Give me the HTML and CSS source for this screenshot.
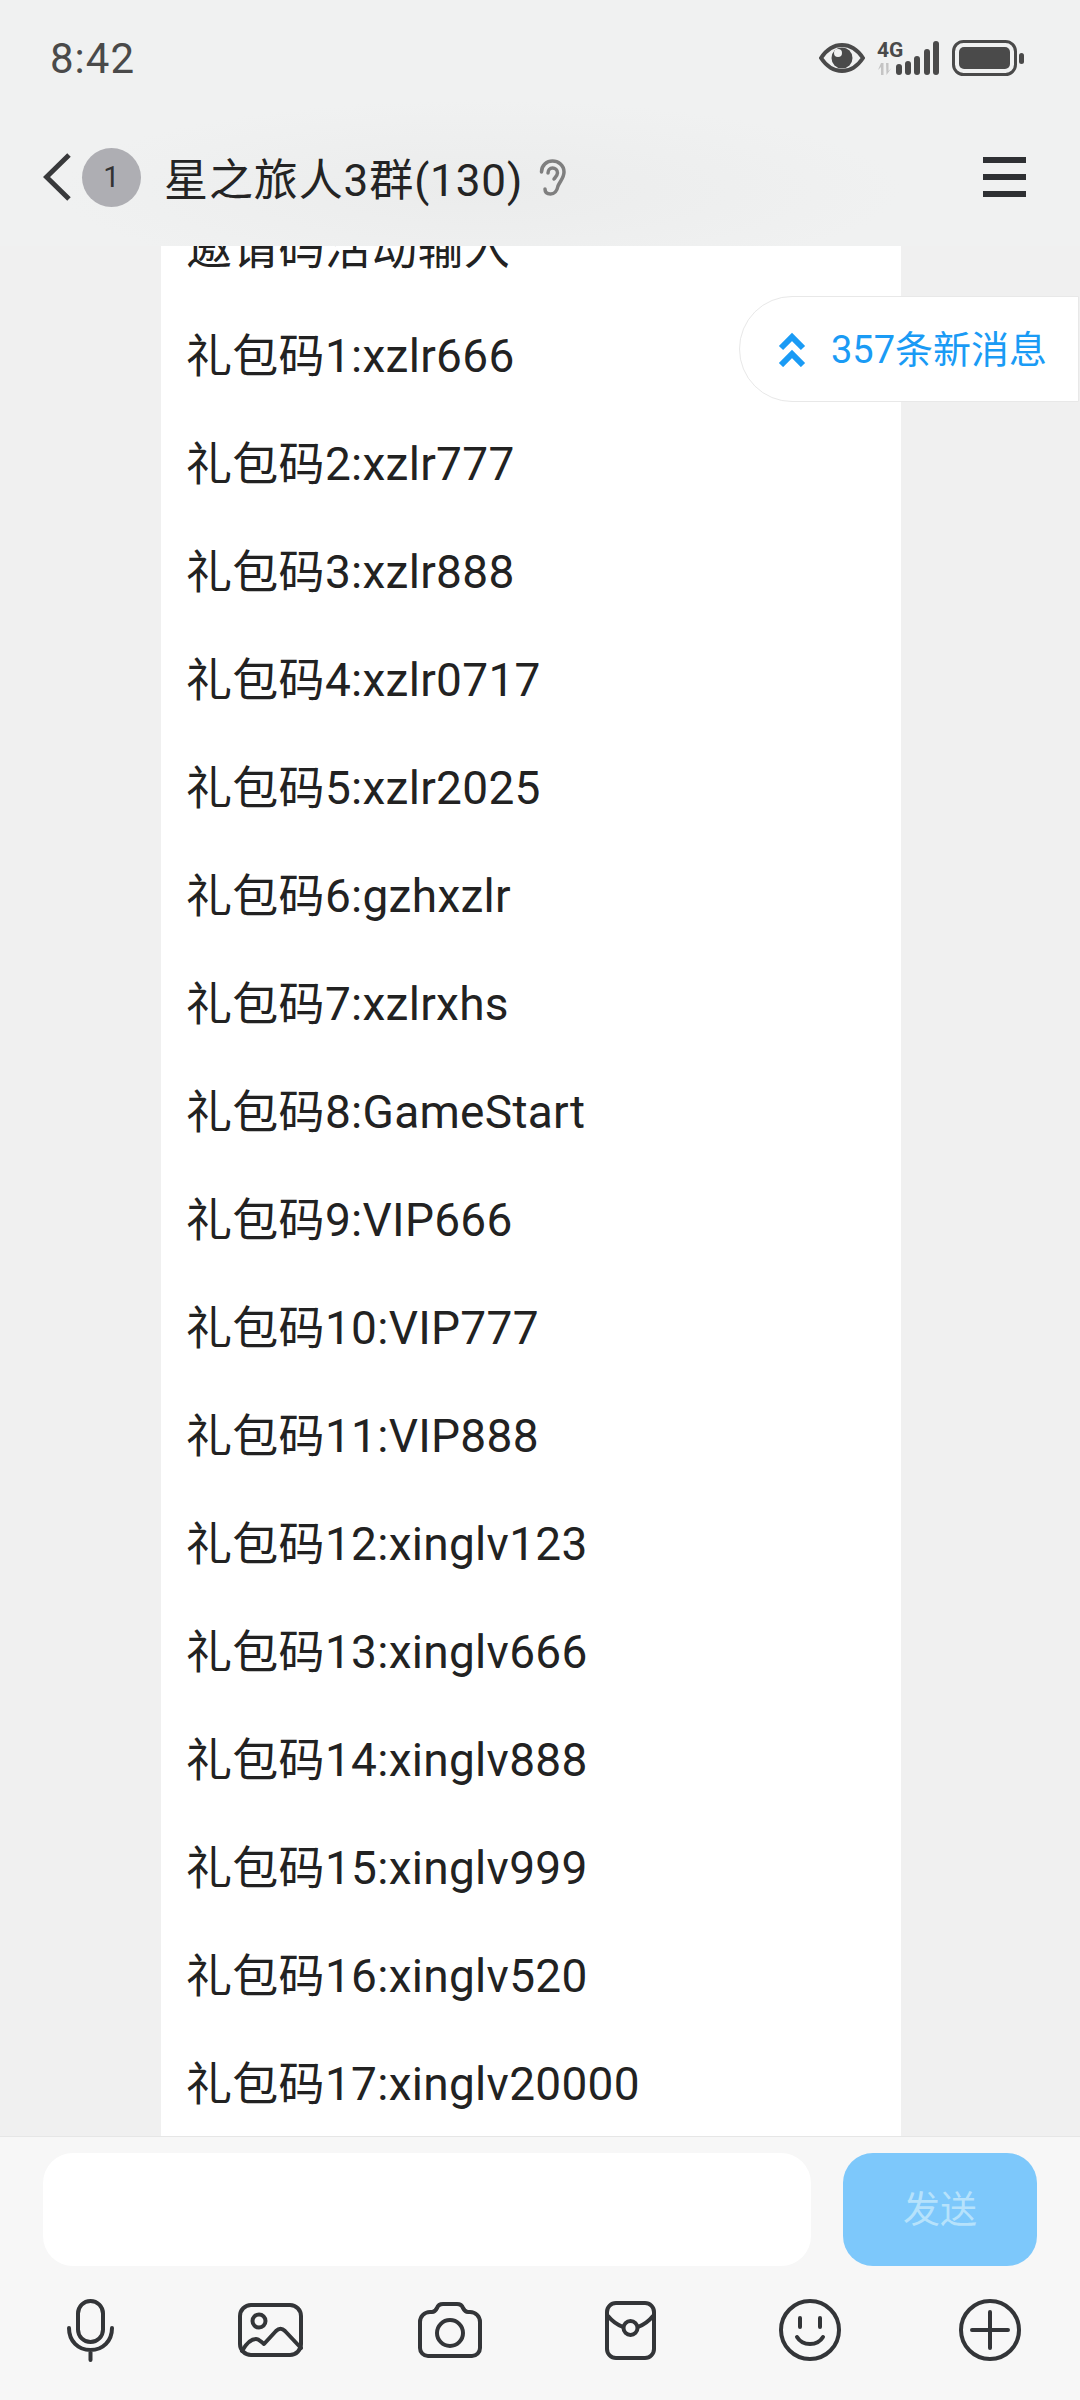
FILE: index.html
```html
<!DOCTYPE html>
<html lang="zh-CN">
<head>
<meta charset="utf-8">
<title>星之旅人3群</title>
<link rel="stylesheet" href="styles.css">
</head>
<body>
<div class="app">
  <header class="top">
    <div class="status">
      <span class="time">8:42</span>
      <div class="status-icons">
        <svg class="eye" viewBox="0 0 46 30" width="46" height="30">
          <path d="M2 15C8 6 15 2 23 2s15 4 21 13c-6 9-13 13-21 13S8 24 2 15z" fill="none" stroke="#4a4a4a" stroke-width="4"/>
          <circle cx="23" cy="15" r="10.500" fill="#4a4a4a"/>
          <circle cx="19" cy="10" r="4" fill="#f0f1f1"/>
        </svg>
        <svg class="signal" viewBox="0 0 62 34" width="62" height="34">
          <text class="net" x="0" y="16">4G</text>
          <path d="M4 22h2.500v12H4v-8l-3 3zM9 22h2.500v8l3-3-5 7z" fill="#c4c4c4"/>
          <rect x="19" y="23" width="6" height="11" rx="3" fill="#4a4a4a"/>
          <rect x="28" y="20" width="6" height="14" rx="3" fill="#4a4a4a"/>
          <rect x="37" y="15" width="6" height="19" rx="3" fill="#4a4a4a"/>
          <rect x="47" y="8" width="6" height="26" rx="3" fill="#4a4a4a"/>
          <rect x="56" y="0" width="6" height="34" rx="3" fill="#4a4a4a"/>
        </svg>
        <svg class="battery" viewBox="0 0 72 36" width="72" height="36">
          <rect x="1.500" y="1.500" width="62" height="33" rx="10" fill="none" stroke="#4a4a4a" stroke-width="3"/>
          <rect x="7" y="7" width="51" height="22" rx="5" fill="#4a4a4a"/>
          <rect x="67" y="13" width="5" height="11" rx="2.500" fill="#4a4a4a"/>
        </svg>
      </div>
    </div>
    <nav class="nav">
      <svg class="back" viewBox="0 0 29 50" width="29" height="50">
        <path d="M26 3L3.500 25 26 47" fill="none" stroke="#38393b" stroke-width="5"/>
      </svg>
      <span class="badge">1</span>
      <h1 class="title">星之旅人3群(130)</h1>
      <svg class="ear" viewBox="0 0 27 37" width="27" height="37">
        <path d="M2.500 13C2.500 6 8 2 13.500 2S25 6 25 13c0 6-4 9-6 14-1 5-4 8-7.500 8S6 33 6 30" fill="none" stroke="#7f7f7f" stroke-width="3.500" stroke-linecap="round"/>
        <path d="M9 14c0-3 2-5 4.500-5s5 2 5 5c0 2-2 4-3.500 6" fill="none" stroke="#7f7f7f" stroke-width="3.500" stroke-linecap="round"/>
      </svg>
      <div class="menu"><i></i><i></i><i></i></div>
    </nav>
  </header>

  <main class="messages">
    <ul class="card">
      <li>邀请码活动输入</li>
      <li>礼包码1:xzlr666</li>
      <li>礼包码2:xzlr777</li>
      <li>礼包码3:xzlr888</li>
      <li>礼包码4:xzlr0717</li>
      <li>礼包码5:xzlr2025</li>
      <li>礼包码6:gzhxzlr</li>
      <li>礼包码7:xzlrxhs</li>
      <li>礼包码8:GameStart</li>
      <li>礼包码9:VIP666</li>
      <li>礼包码10:VIP777</li>
      <li>礼包码11:VIP888</li>
      <li>礼包码12:xinglv123</li>
      <li>礼包码13:xinglv666</li>
      <li>礼包码14:xinglv888</li>
      <li>礼包码15:xinglv999</li>
      <li>礼包码16:xinglv520</li>
      <li>礼包码17:xinglv20000</li>
    </ul>
    <div class="new-pill">
      <svg viewBox="0 0 28 35" width="28" height="35">
        <path d="M3 16L14 5l11 11M3 33l11-11 11 11" fill="none" stroke="#1a9bf5" stroke-width="6"/>
      </svg>
      <span class="pill-text">357条新消息</span>
    </div>
  </main>

  <footer class="composer">
    <div class="input-row">
      <div class="input"></div>
      <button class="send">发送</button>
    </div>
    <div class="tools">
      <div class="tool">
        <svg viewBox="0 0 47 63" width="47" height="63" fill="none" stroke="#333538" stroke-width="4" stroke-linecap="round">
          <rect x="11" y="2" width="25" height="41" rx="12.500"/>
          <path d="M2 29c0 13 9 22 21.500 22S45 42 45 29M23.500 51v10"/>
        </svg>
      </div>
      <div class="tool">
        <svg viewBox="0 0 65 54" width="65" height="54" fill="none" stroke="#333538" stroke-width="4" stroke-linecap="round" stroke-linejoin="round">
          <rect x="2" y="2" width="61" height="50" rx="11"/>
          <circle cx="21" cy="18" r="6.500"/>
          <path d="M4 48c4-7 9-12 14-12 3 0 5 3 8 5l12-13c3-3 6-3 9 0l16 17"/>
        </svg>
      </div>
      <div class="tool">
        <svg viewBox="0 0 64 56" width="64" height="56" fill="none" stroke="#333538" stroke-width="4" stroke-linejoin="round">
          <path d="M12 10h2c3 0 4-2 5-4 1-3 3-4 6-4h14c3 0 5 1 6 4 1 2 2 4 5 4h2a10 10 0 0 1 10 10v26a8 8 0 0 1-8 8H10a8 8 0 0 1-8-8V20a10 10 0 0 1 10-10z"/>
          <circle cx="32" cy="31" r="13"/>
        </svg>
      </div>
      <div class="tool">
        <svg viewBox="0 0 51 59" width="51" height="59" fill="none" stroke="#333538" stroke-width="4" stroke-linecap="round">
          <rect x="2" y="2" width="47" height="55" rx="9"/>
          <path d="M3 15c4 5 10 9 15 11M33 26c5-2 11-6 15-11"/>
          <circle cx="25.500" cy="27" r="7"/>
        </svg>
      </div>
      <div class="tool">
        <svg viewBox="0 0 62 62" width="62" height="62" fill="none" stroke="#333538" stroke-width="4" stroke-linecap="round">
          <circle cx="31" cy="31" r="29"/>
          <path d="M21 19v9M41 19v9M18 38c3 5 8 7 13 7s10-2 13-7"/>
        </svg>
      </div>
      <div class="tool">
        <svg viewBox="0 0 62 62" width="62" height="62" fill="none" stroke="#333538" stroke-width="4" stroke-linecap="round">
          <circle cx="31" cy="31" r="29"/>
          <path d="M13 31h36M31 13v36"/>
        </svg>
      </div>
    </div>
  </footer>
</div>
</body>
</html>
```

FILE: styles.css
```css
* { box-sizing: border-box; }
html, body { margin: 0; padding: 0; }
body {
  background: #f0f0f0;
  font-family: "Roboto", "Noto Sans CJK SC", sans-serif;
}
.app {
  width: 1080px;
  height: 2400px;
  display: flex;
  flex-direction: column;
  overflow: hidden;
}
.top {
  height: 246px;
  flex: none;
  position: relative;
  z-index: 2;
  background: radial-gradient(ellipse 420px 90px at 480px 190px, #ebecec, #f0f1f1 100%);
}
.status {
  height: 116px;
  padding: 0 56px 0 50px;
  display: flex;
  align-items: center;
  justify-content: space-between;
}
.time {
  font-size: 42px;
  color: #4a4a4a;
  letter-spacing: 1px;
}
.status-icons {
  display: flex;
  align-items: center;
  gap: 12px;
}
.signal { margin-right: 1px; }
.net {
  font-family: "Roboto", sans-serif;
  font-size: 21px;
  font-weight: 700;
  fill: #4a4a4a;
}
.nav {
  height: 122px;
  padding: 0 54px 0 43px;
  display: flex;
  align-items: center;
}
.back { flex: none; }
.badge {
  width: 59px;
  height: 59px;
  margin-left: 10px;
  border-radius: 50%;
  background: #aeaeb3;
  color: #333;
  font-size: 29px;
  display: flex;
  align-items: center;
  justify-content: center;
}
.title {
  margin: 0 0 0 23px;
  font-size: 44px;
  font-weight: 400;
  letter-spacing: .9px;
  color: #242424;
  white-space: nowrap;
}
.ear { margin-left: 16px; }
.menu {
  margin-left: auto;
  display: flex;
  flex-direction: column;
  gap: 11px;
}
.menu i {
  display: block;
  width: 43px;
  height: 6px;
  background: #2e3033;
}
.messages {
  flex: 1;
  min-height: 0;
  position: relative;
  overflow: hidden;
  background: #f0f0f0;
}
.card {
  list-style: none;
  width: 740px;
  margin: -53px 0 0 161px;
  padding: 0 0 0 25px;
  background: #fff;
}
.card li {
  height: 108px;
  line-height: 110px;
  font-size: 46px;
  font-weight: 400;
  letter-spacing: .3px;
  color: #222;
  white-space: nowrap;
}
.new-pill {
  position: absolute;
  top: 50px;
  right: 1px;
  width: 340px;
  height: 106px;
  display: flex;
  align-items: center;
  gap: 25px;
  padding-left: 38px;
  background: #fff;
  border: 1px solid #e8e8e8;
  border-radius: 53px 0 0 53px;
  color: #1a9bf5;
  font-size: 38px;
  white-space: nowrap;
}
.pill-text { padding-bottom: 5px; }
.composer {
  height: 264px;
  flex: none;
  background: #f7f7f7;
  border-top: 1px solid #e6e6e6;
}
.input-row {
  display: flex;
  gap: 32px;
  padding: 16px 43px 0;
}
.input {
  flex: 1;
  height: 113px;
  background: #fff;
  border-radius: 30px;
}
.send {
  width: 194px;
  height: 113px;
  border: 0;
  padding: 0 0 5px;
  border-radius: 30px;
  background: #7dc8fb;
  color: #b6e2fb;
  font-family: inherit;
  font-size: 37px;
}
.tools {
  display: flex;
  height: 128px;
}
.tool {
  width: 180px;
  display: flex;
  align-items: center;
  justify-content: center;
}
```
